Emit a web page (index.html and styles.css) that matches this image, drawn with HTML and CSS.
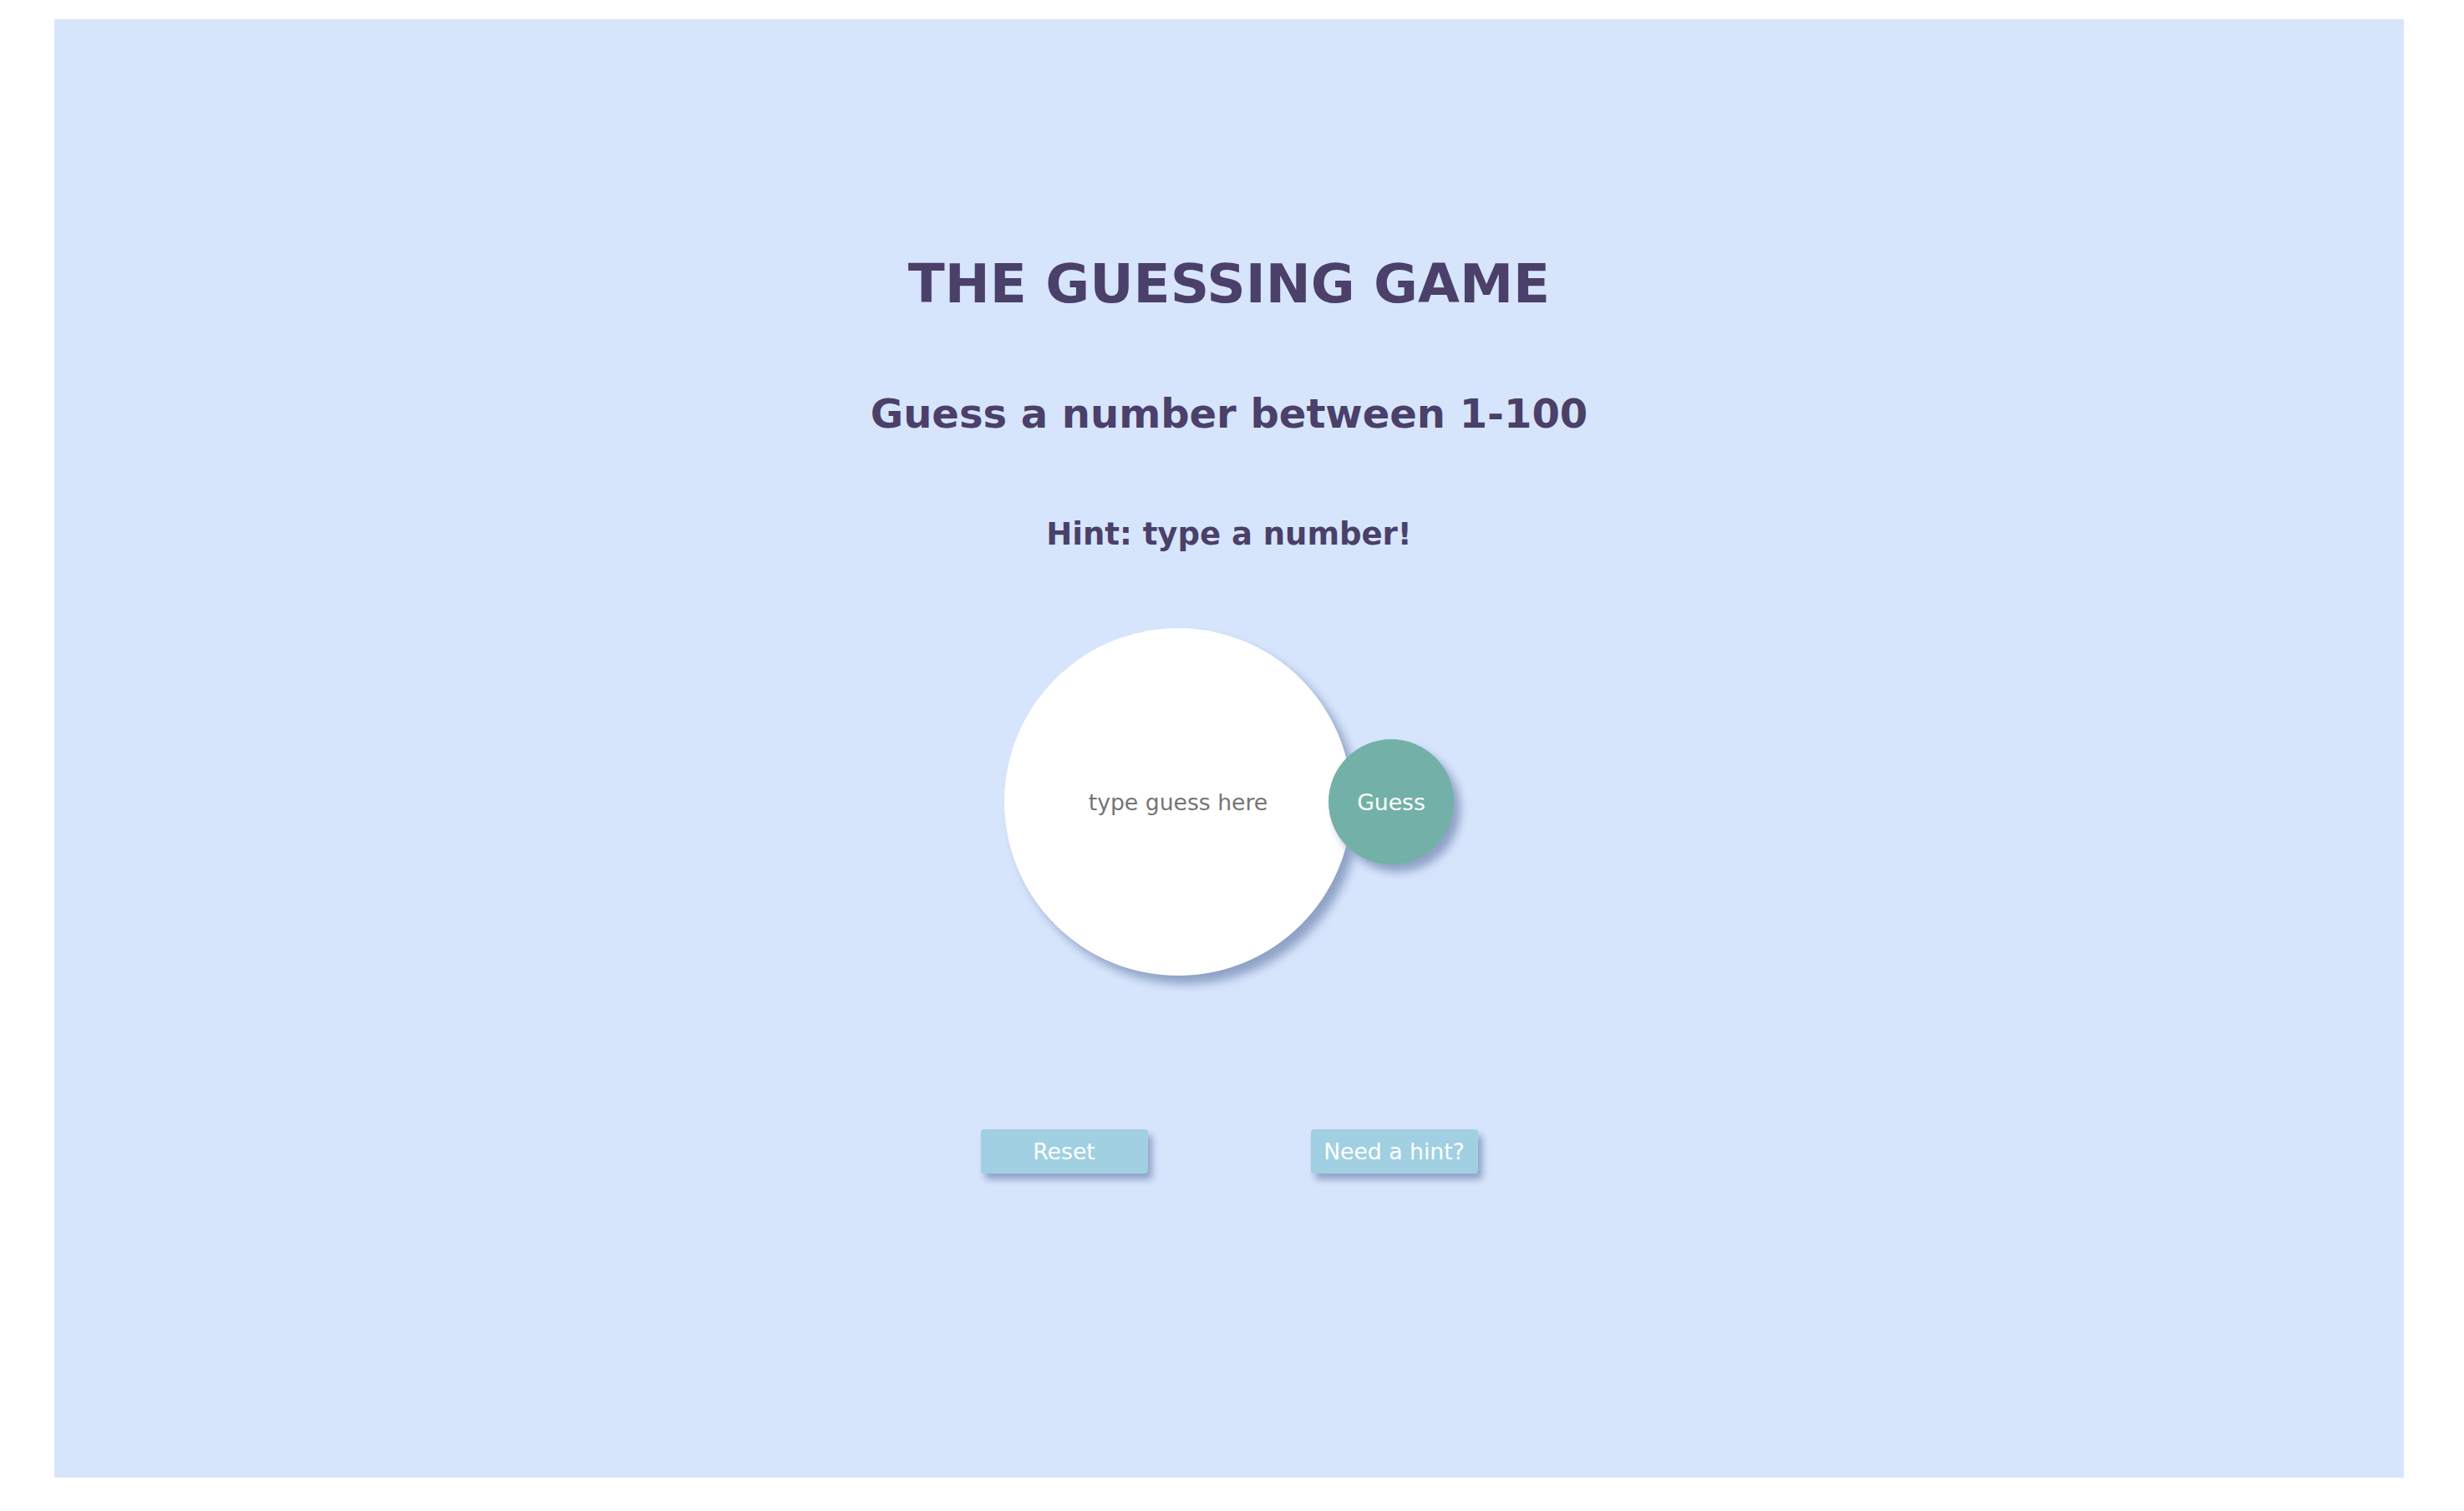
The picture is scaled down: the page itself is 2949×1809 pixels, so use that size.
FILE: index.html
```html
<!DOCTYPE html>
<html lang="en">
<head>
<meta charset="utf-8">
<title>The Guessing Game</title>
<link rel="stylesheet" href="styles.css">
</head>
<body>
<main class="panel">
  <h1 class="title">THE GUESSING GAME</h1>
  <h2 class="subtitle">Guess a number between 1-100</h2>
  <h3 class="hint">Hint: type a number!</h3>
  <div class="guess-row">
    <input class="guess-input" type="text" placeholder="type guess here">
    <button class="guess-btn" type="button">Guess</button>
  </div>
  <div class="controls">
    <button class="ctrl-btn" type="button">Reset</button>
    <button class="ctrl-btn" type="button">Need a hint?</button>
  </div>
</main>
</body>
</html>
```
FILE: styles.css
```css
html, body {
  margin: 0;
  padding: 0;
  background: #ffffff;
}

body {
  font-family: "DejaVu Sans", Verdana, sans-serif;
}

.panel {
  box-sizing: border-box;
  margin: 23px 72px 40px 65px;
  height: 1746px;
  background: #d7e5fc;
  padding-top: 279px;
  display: flex;
  flex-direction: column;
  align-items: center;
  color: #4a4069;
}

.title {
  margin: 0;
  font-size: 64.5px;
  font-weight: 700;
  line-height: normal;
}

.subtitle {
  margin: 90px 0 0;
  font-size: 48px;
  font-weight: 700;
  line-height: normal;
}

.hint {
  margin: 95px 0 0;
  font-size: 37px;
  font-weight: 700;
  line-height: normal;
}

.guess-row {
  margin-top: 91px;
  display: flex;
  align-items: center;
}

.guess-input {
  box-sizing: border-box;
  width: 416px;
  height: 416px;
  border: none;
  border-radius: 50%;
  background: #ffffff;
  text-align: center;
  font-family: "DejaVu Sans", Verdana, sans-serif;
  font-size: 26.67px;
  color: #444444;
  padding: 0;
  outline: none;
  box-shadow: 9px 10px 12px #8fa2c6;
}

.guess-input::placeholder {
  color: #757575;
}

.guess-btn {
  position: relative;
  box-sizing: border-box;
  width: 150px;
  height: 150px;
  margin-left: -28px;
  border: none;
  border-radius: 50%;
  background: #73b1a8;
  color: #ffffff;
  font-family: "DejaVu Sans", Verdana, sans-serif;
  font-size: 26.67px;
  padding: 0;
  box-shadow: 8px 9px 11px #8fa2c6;
}

.controls {
  margin-top: 184px;
  display: flex;
  gap: 195px;
}

.ctrl-btn {
  box-sizing: border-box;
  width: 200px;
  height: 53px;
  border: none;
  border-radius: 4px;
  background: #a1d0e2;
  color: #ffffff;
  font-family: "DejaVu Sans", Verdana, sans-serif;
  font-size: 26.67px;
  padding: 0;
  box-shadow: 5px 7px 8px #8fa2c6;
}
```
